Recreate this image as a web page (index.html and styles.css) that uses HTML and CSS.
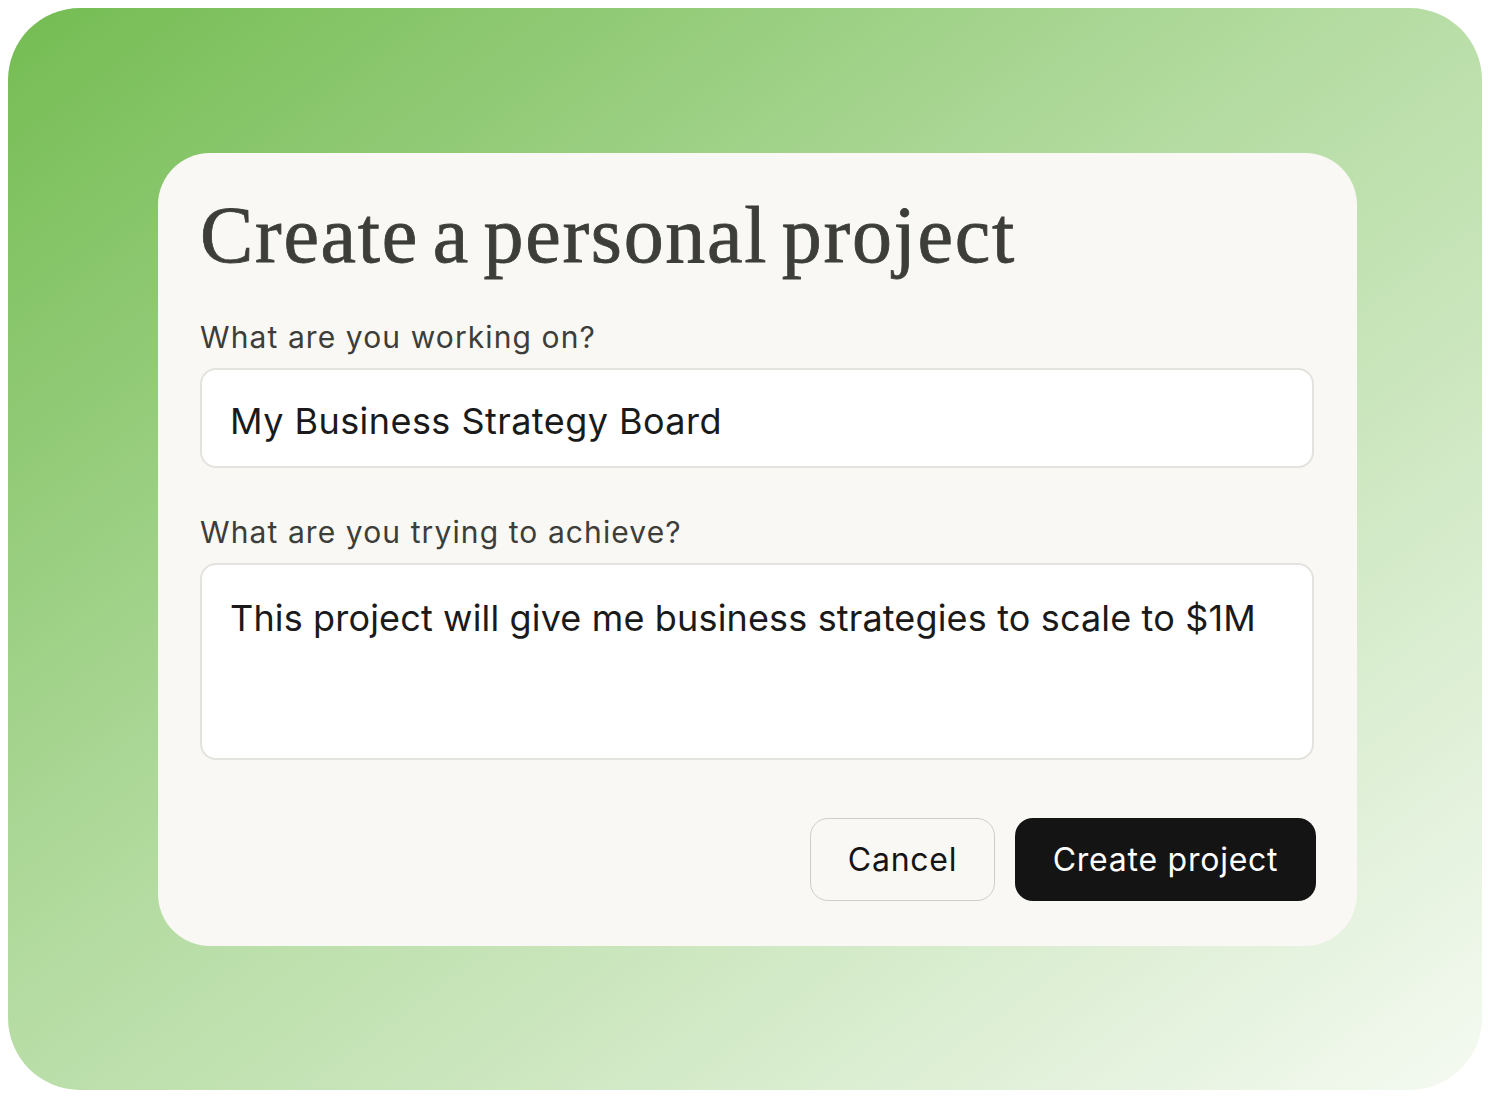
FILE: index.html
```html
<!DOCTYPE html>
<html lang="en">
<head>
<meta charset="utf-8">
<title>Create a personal project</title>
<link rel="stylesheet" href="styles.css">
</head>
<body>
<div class="backdrop">
  <div class="card">
    <h1 class="title">Create a personal project</h1>
    <label class="label" for="name">What are you working on?</label>
    <input class="field" id="name" type="text" value="My Business Strategy Board">
    <label class="label label-second" for="goal">What are you trying to achieve?</label>
    <textarea class="field area" id="goal">This project will give me business strategies to scale to $1M</textarea>
    <div class="actions">
      <button class="btn btn-cancel" type="button">Cancel</button>
      <button class="btn btn-primary" type="button">Create project</button>
    </div>
  </div>
</div>
</body>
</html>
```
FILE: styles.css
```css
html, body {
  background: #ffffff;
}
body {
  margin: 8px;
}
.backdrop {
  width: 1474px;
  height: 1082px;
  box-sizing: border-box;
  border-radius: 72px;
  background: linear-gradient(to bottom right, #74bc52 0%, #b3dba0 45%, #f5faf2 100%);
  padding: 145px 0 0 150px;
}
.card {
  width: 1199px;
  box-sizing: border-box;
  background: #f9f8f4;
  border-radius: 52px;
  padding: 42px 43px 45px 42px;
  display: flex;
  flex-direction: column;
}
.title {
  margin: 0;
  font-family: "Liberation Serif", "DejaVu Serif", serif;
  font-weight: normal;
  font-size: 80px;
  line-height: 80px;
  letter-spacing: 1.7px;
  word-spacing: -8px;
  color: #3d3d3a;
  -webkit-text-stroke: 0.8px #3d3d3a;
}
.label {
  margin-top: 45px;
  font-family: Inter, "Noto Sans", sans-serif;
  font-size: 30px;
  line-height: 34px;
  letter-spacing: 1.1px;
  color: #3d3d3a;
}
.label-second {
  margin-top: 47px;
}
.field {
  margin: 14px 0 0 0;
  box-sizing: border-box;
  width: 100%;
  height: 100px;
  border: 2px solid #e3e2de;
  border-radius: 16px;
  background: #ffffff;
  padding: 6px 28px 0 28px;
  font-family: Inter, "Noto Sans", sans-serif;
  font-size: 36px;
  letter-spacing: 0.45px;
  color: #1a1a1a;
  outline: none;
}
.area {
  display: block;
  height: 197px;
  padding: 32px 28px 0 28px;
  line-height: 43px;
  letter-spacing: 0.15px;
  resize: none;
}
.actions {
  margin-top: 58px;
  margin-right: -2px;
  display: flex;
  justify-content: flex-end;
  gap: 20px;
}
.btn {
  height: 83px;
  border-radius: 18px;
  font-family: Inter, "Noto Sans", sans-serif;
  font-size: 32px;
  letter-spacing: 0.75px;
  padding: 0;
  cursor: pointer;
}
.btn-cancel {
  width: 185px;
  background: transparent;
  border: 1.5px solid #cfcdc8;
  color: #141414;
}
.btn-primary {
  width: 301px;
  background: #141414;
  border: none;
  color: #ffffff;
}
```
